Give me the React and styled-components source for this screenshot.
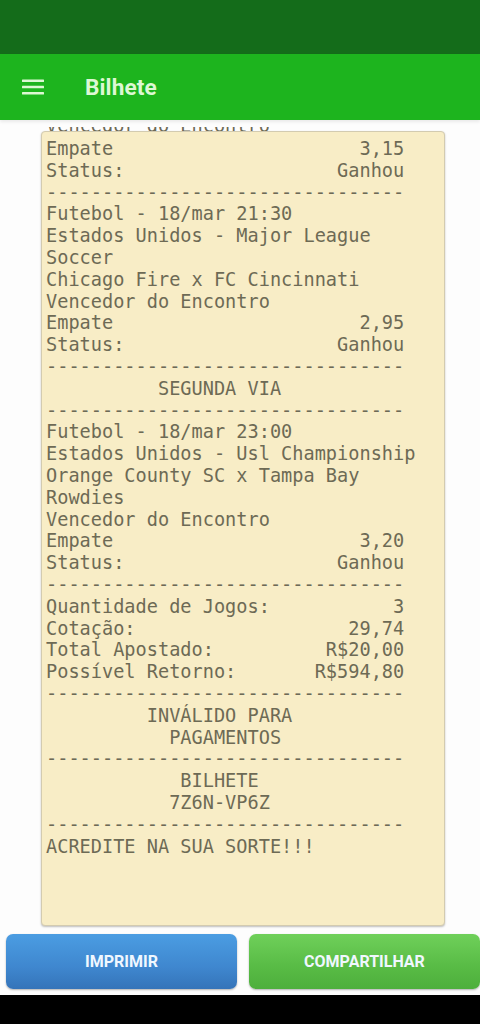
import React from "react";
import styled, { createGlobalStyle } from "styled-components";

const Global = createGlobalStyle`
  html, body { margin: 0; padding: 0; background: #ffffff; }
  #root { height: 1024px; }
  * { box-sizing: border-box; }
`;

const Screen = styled.div`
  height: 1024px;
  display: flex;
  flex-direction: column;
  background: #fdfdfd;
  overflow: hidden;
`;

const StatusBar = styled.div`
  height: 54px;
  flex: none;
  background: #146c1a;
`;

const AppBar = styled.header`
  height: 66px;
  flex: none;
  background: #1db41e;
  display: flex;
  align-items: center;
  padding-left: 22px;
  gap: 41px;
  box-shadow: 0 2px 3px rgba(0, 0, 0, 0.08);
  position: relative;
  z-index: 1;
`;

const Title = styled.h1`
  margin: 0;
  font-family: Roboto, "Liberation Sans", sans-serif;
  font-weight: 700;
  font-size: 22.6px;
  color: #ddf8d4;
  letter-spacing: 0.1px;
`;

const Viewport = styled.main`
  flex: 1;
  min-height: 0;
  display: flex;
  flex-direction: column;
  padding-top: 7px;
  overflow: hidden;
`;

const mono = `"DejaVu Sans Mono", "Liberation Mono", monospace`;

const Peek = styled.div`
  height: 4px;
  flex: none;
  overflow: hidden;
  display: flex;
  align-items: flex-end;
  padding-left: 46px;
`;

const PeekLine = styled.div`
  font-family: ${mono};
  font-size: 18.6px;
  line-height: 21.8px;
  color: #6d6a55;
  white-space: pre;
  margin-bottom: -6px;
`;

const Card = styled.section`
  margin: 0 35px 0 41px;
  height: 795px;
  flex: none;
  background: #f8edc6;
  border: 1px solid #d3cbb0;
  border-radius: 4px;
  box-shadow: 0 1px 2px rgba(0, 0, 0, 0.25);
  padding: 6px 0 0 4px;
  overflow: hidden;
`;

const Receipt = styled.pre`
  margin: 0;
  font-family: ${mono};
  font-size: 18.6px;
  line-height: 21.8px;
  color: #6d6a55;
  white-space: pre;
`;

const Buttons = styled.div`
  flex: none;
  display: grid;
  grid-template-columns: 231px 231px;
  gap: 12px;
  padding: 8px 0 0 6px;
  height: 69px;
`;

const Button = styled.button`
  height: 55px;
  border: none;
  border-radius: 7px;
  font-family: Roboto, "Liberation Sans", sans-serif;
  font-weight: 700;
  font-size: 16px;
  color: #f0f7ff;
  background: ${(p) =>
    p.$variant === "green"
      ? "linear-gradient(180deg, #6fd05a 0%, #58bb45 60%, #4daf3c 100%)"
      : "linear-gradient(180deg, #4b9de2 0%, #3f87cf 60%, #3574b9 100%)"};
  box-shadow: 0 1px 2px rgba(0, 0, 0, 0.3);
  cursor: pointer;
`;

const NavBar = styled.div`
  flex: none;
  height: 29px;
  background: #000;
  margin-top: auto;
`;

const Menu = () => (
  <svg width="22" height="16" viewBox="0 0 22 16" aria-hidden="true">
    <g fill="#ddf8d4">
      <rect x="0" y="0.5" width="22" height="2.6" rx="0.5" />
      <rect x="0" y="6.7" width="22" height="2.6" rx="0.5" />
      <rect x="0" y="12.9" width="22" height="2.6" rx="0.5" />
    </g>
  </svg>
);

const DASH = "-".repeat(32);
const row = (l, r) => l + " ".repeat(Math.max(1, 32 - l.length - r.length)) + r;
const center = (t, pad) => " ".repeat(pad) + t;

const lines = [
  row("Empate", "3,15"),
  row("Status:", "Ganhou"),
  DASH,
  "Futebol - 18/mar 21:30",
  "Estados Unidos - Major League",
  "Soccer",
  "Chicago Fire x FC Cincinnati",
  "Vencedor do Encontro",
  row("Empate", "2,95"),
  row("Status:", "Ganhou"),
  DASH,
  center("SEGUNDA VIA", 10),
  DASH,
  "Futebol - 18/mar 23:00",
  "Estados Unidos - Usl Championship",
  "Orange County SC x Tampa Bay",
  "Rowdies",
  "Vencedor do Encontro",
  row("Empate", "3,20"),
  row("Status:", "Ganhou"),
  DASH,
  row("Quantidade de Jogos:", "3"),
  row("Cotação:", "29,74"),
  row("Total Apostado:", "R$20,00"),
  row("Possível Retorno:", "R$594,80"),
  DASH,
  center("INVÁLIDO PARA", 9),
  center("PAGAMENTOS", 11),
  DASH,
  center("BILHETE", 12),
  center("7Z6N-VP6Z", 11),
  DASH,
  "ACREDITE NA SUA SORTE!!!",
];

export default function App() {
  return (
    <>
      <Global />
      <Screen>
        <StatusBar />
        <AppBar>
          <Menu />
          <Title>Bilhete</Title>
        </AppBar>
        <Viewport>
          <Peek>
            <PeekLine>Vencedor do Encontro</PeekLine>
          </Peek>
          <Card>
            <Receipt>{lines.join("\n")}</Receipt>
          </Card>
          <Buttons>
            <Button $variant="blue">IMPRIMIR</Button>
            <Button $variant="green">COMPARTILHAR</Button>
          </Buttons>
        </Viewport>
        <NavBar />
      </Screen>
    </>
  );
}
